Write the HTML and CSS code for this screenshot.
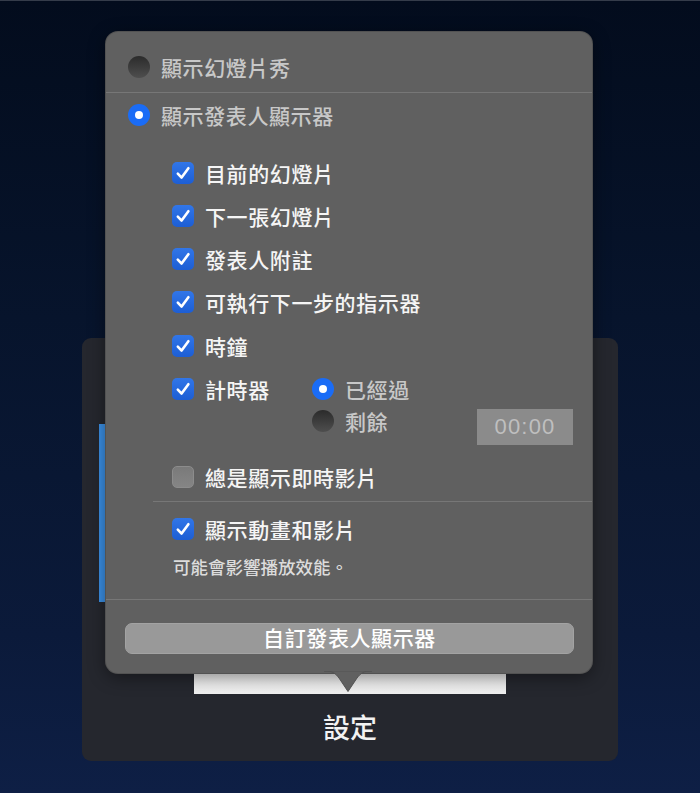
FILE: index.html
```html
<!DOCTYPE html>
<html lang="zh-Hant">
<head>
    <meta charset="UTF-8">
    <title>設定</title>
    <link rel="stylesheet" href="styles.css">
</head>
<body>
    <div class="stage">
        <div class="panel">
            <div class="panel-accent"></div>
            <div class="panel-thumb"></div>
            <div class="panel-label">設定</div>
        </div>

        <div class="popover">
            <div class="mode mode-first">
                <span class="radio"></span>
                <span>顯示幻燈片秀</span>
            </div>
            <div class="sep"></div>
            <div class="mode mode-second">
                <span class="radio on"></span>
                <span>顯示發表人顯示器</span>
            </div>

            <div class="options">
                <div class="check-row">
                    <span class="checkbox"><svg viewBox="0 0 22 22"><path d="M5.8 11.6 L9.6 15.6 L16.4 6.2"/></svg></span>
                    <span>目前的幻燈片</span>
                </div>
                <div class="check-row">
                    <span class="checkbox"><svg viewBox="0 0 22 22"><path d="M5.8 11.6 L9.6 15.6 L16.4 6.2"/></svg></span>
                    <span>下一張幻燈片</span>
                </div>
                <div class="check-row">
                    <span class="checkbox"><svg viewBox="0 0 22 22"><path d="M5.8 11.6 L9.6 15.6 L16.4 6.2"/></svg></span>
                    <span>發表人附註</span>
                </div>
                <div class="check-row">
                    <span class="checkbox"><svg viewBox="0 0 22 22"><path d="M5.8 11.6 L9.6 15.6 L16.4 6.2"/></svg></span>
                    <span>可執行下一步的指示器</span>
                </div>
                <div class="check-row">
                    <span class="checkbox"><svg viewBox="0 0 22 22"><path d="M5.8 11.6 L9.6 15.6 L16.4 6.2"/></svg></span>
                    <span>時鐘</span>
                </div>
                <div class="timer">
                    <div class="check-row timer-check">
                        <span class="checkbox"><svg viewBox="0 0 22 22"><path d="M5.8 11.6 L9.6 15.6 L16.4 6.2"/></svg></span>
                        <span>計時器</span>
                    </div>
                    <div class="timer-modes">
                        <div class="mode">
                            <span class="radio on"></span>
                            <span>已經過</span>
                        </div>
                        <div class="mode">
                            <span class="radio"></span>
                            <span>剩餘</span>
                        </div>
                    </div>
                    <div class="time-box">00:00</div>
                </div>
                <div class="check-row">
                    <span class="checkbox off"></span>
                    <span>總是顯示即時影片</span>
                </div>
            </div>

            <div class="sep sep-inset"></div>

            <div class="anim">
                <div class="check-row">
                    <span class="checkbox"><svg viewBox="0 0 22 22"><path d="M5.8 11.6 L9.6 15.6 L16.4 6.2"/></svg></span>
                    <span>顯示動畫和影片</span>
                </div>
                <p class="note">可能會影響播放效能。</p>
            </div>

            <div class="sep sep-bottom"></div>

            <button class="custom-button">自訂發表人顯示器</button>

            <svg class="popover-arrow" viewBox="0 0 48 22">
                <path d="M0 0 C9 0 11 2 15 7 L24 20.5 L33 7 C37 2 39 0 48 0 Z"/>
            </svg>
        </div>
    </div>
</body>
</html>
```

FILE: styles.css
```css
body {
    margin: 0;
    height: 793px;
    overflow: hidden;
    font-family: "Noto Sans CJK TC", "Noto Sans", sans-serif;
    background: linear-gradient(180deg, #030c1d 0%, #07142c 40%, #0b1a3a 80%, #0e1f45 100%);
}
.stage {
    position: relative;
    height: 792px;
    border-top: 1px solid #353c4a;
}
.panel {
    margin: 337px 0 0 82px;
    width: 536px;
    height: 423px;
    box-sizing: border-box;
    padding-top: 86px;
    background-color: #25272e;
    border-radius: 9px;
}
.panel-accent {
    width: 6px;
    height: 178px;
    margin-left: 17px;
    background-color: #3b8fe4;
}
.panel-thumb {
    width: 312px;
    height: 92px;
    margin-left: 112px;
    background: linear-gradient(180deg, #e4e4e4, #f0f0f0);
}
.panel-label {
    margin-top: 16px;
    text-align: center;
    color: #f2f2f2;
    font-size: 27px;
    font-weight: 500;
    line-height: 34px;
}
.popover {
    position: absolute;
    top: 31px;
    left: 106px;
    width: 486px;
    height: 641px;
    background-color: #606060;
    border-radius: 12px;
    box-shadow: 0 0 0 1px #525252, 0 4px 18px rgba(0, 0, 0, 0.45);
}
.popover-arrow {
    position: absolute;
    left: 218px;
    bottom: -20px;
    width: 48px;
    height: 22px;
}
.popover-arrow path {
    fill: #606060;
    stroke: #525252;
    stroke-width: 1;
}
.mode {
    display: flex;
    align-items: center;
    gap: 11px;
    height: 22px;
    color: #c8c8c8;
    font-size: 21px;
    font-weight: 500;
    letter-spacing: 0.6px;
}
.mode-first {
    padding: 24px 22px 14px;
}
.mode-second {
    padding: 11px 22px 0;
}
.sep {
    height: 1px;
    background-color: #777777;
}
.sep-inset {
    margin: 13px 0 0 47px;
}
.sep-bottom {
    margin-top: 21px;
}
.radio {
    position: relative;
    flex: none;
    width: 22px;
    height: 22px;
    border-radius: 50%;
    background: linear-gradient(180deg, #2b2b2b, #4e4e4e);
}
.radio.on {
    background: #1a6cf6;
}
.radio.on::after {
    content: "";
    position: absolute;
    top: 7px;
    left: 7px;
    width: 8px;
    height: 8px;
    border-radius: 50%;
    background-color: #ffffff;
}
.options {
    display: flex;
    flex-direction: column;
    gap: 21.3px;
    padding: 35.5px 19px 0 66px;
}
.check-row {
    display: flex;
    align-items: center;
    gap: 11px;
    height: 22px;
    color: #f5f5f5;
    font-size: 21px;
    font-weight: 500;
    letter-spacing: 0.6px;
}
.checkbox {
    flex: none;
    width: 22px;
    height: 22px;
    border-radius: 5px;
    background: linear-gradient(180deg, #3176e8, #1d5ed4);
    display: flex;
    align-items: center;
    justify-content: center;
}
.checkbox svg {
    width: 22px;
    height: 22px;
}
.checkbox svg path {
    fill: none;
    stroke: #ffffff;
    stroke-width: 2.6;
    stroke-linecap: round;
    stroke-linejoin: round;
}
.checkbox.off {
    box-sizing: border-box;
    background: linear-gradient(180deg, #7a7a7a, #858585);
    border: 1px solid #8c8c8c;
}
.timer {
    display: flex;
    align-items: flex-start;
}
.timer-check {
    width: 140px;
}
.timer-modes {
    display: flex;
    flex-direction: column;
    gap: 10px;
}
.time-box {
    margin: 31px 0 0 auto;
    width: 96px;
    height: 36px;
    line-height: 36px;
    text-align: center;
    background-color: #8b8b8b;
    color: #bfbfbf;
    font-family: "Liberation Sans", Arial, sans-serif;
    font-size: 22px;
    letter-spacing: 1.2px;
}
.anim {
    padding: 16px 19px 0 66px;
}
.note {
    margin: 16px 0 0 1px;
    color: #dcdcdc;
    font-size: 17.5px;
    font-weight: 500;
    line-height: 22px;
}
.custom-button {
    display: block;
    box-sizing: border-box;
    width: 449px;
    height: 31px;
    margin: 23px 0 0 19px;
    padding: 0 0 3px;
    border: 1px solid #a3a3a3;
    border-radius: 7px;
    background-color: #999999;
    color: #ffffff;
    font-family: "Noto Sans CJK TC", sans-serif;
    font-size: 21px;
    font-weight: 500;
    letter-spacing: 0.6px;
    line-height: 24px;
}
```
